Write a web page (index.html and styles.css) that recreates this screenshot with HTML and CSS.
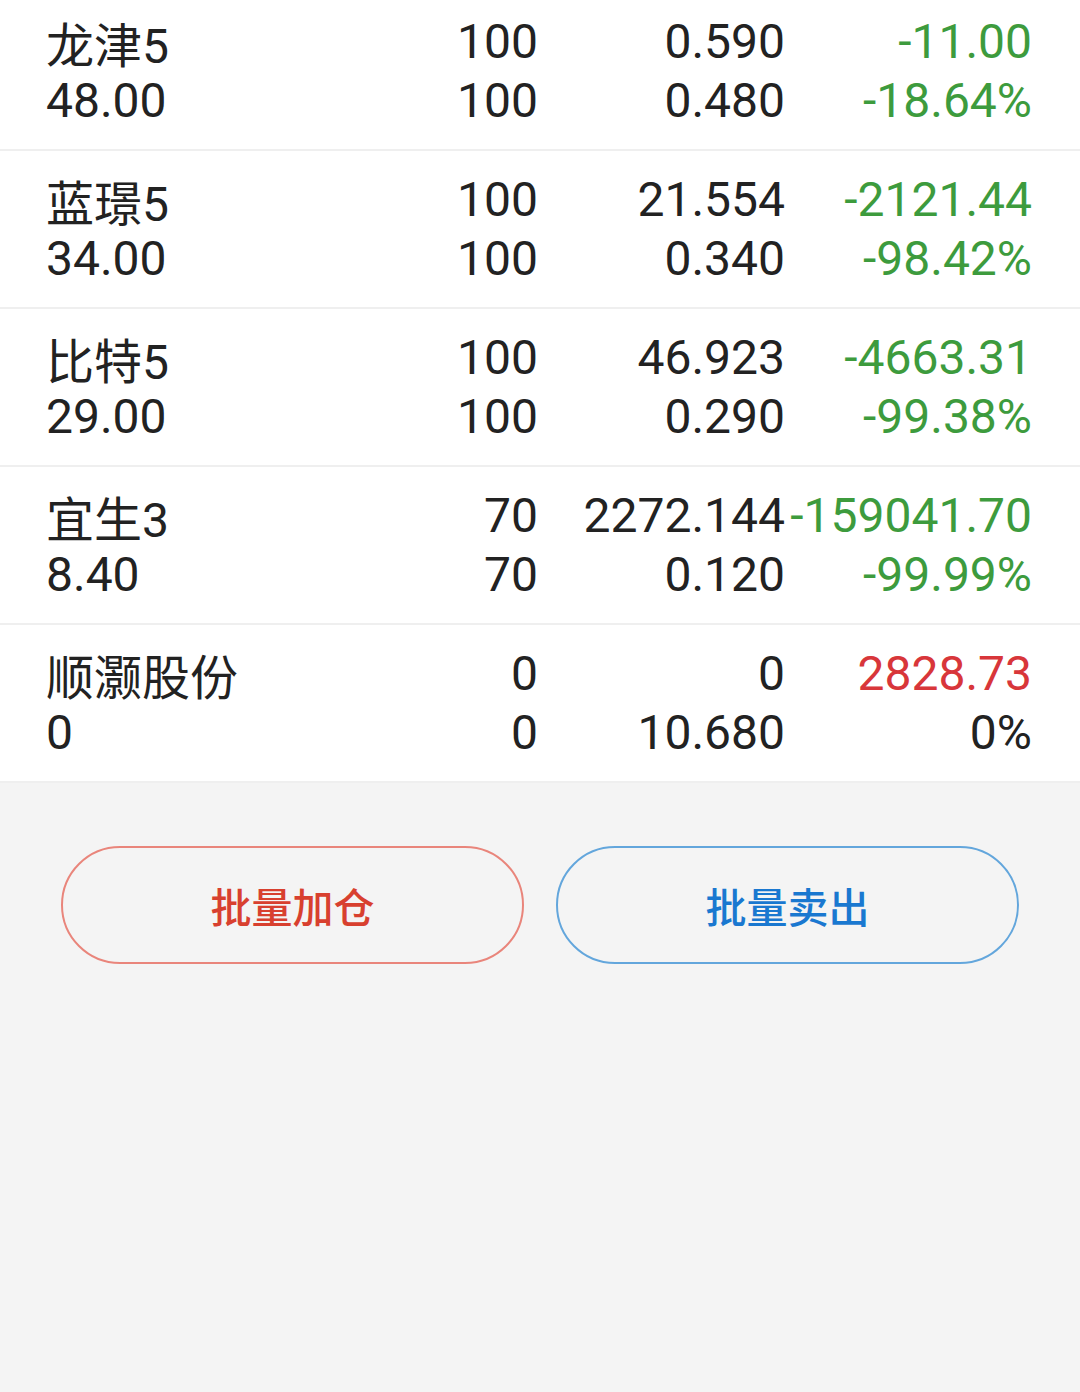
FILE: index.html
```html
<!DOCTYPE html>
<html lang="zh-CN">
<head>
    <meta charset="UTF-8">
    <meta name="viewport" content="width=device-width, initial-scale=1.0">
    <title>持仓</title>
    <link rel="stylesheet" href="styles.css">
</head>
<body>
    <div class="holdings">
        <div class="row first">
            <span class="name">龙津5</span>
            <span class="num">100</span>
            <span class="num">0.590</span>
            <span class="num down">-11.00</span>
            <span class="name">48.00</span>
            <span class="num">100</span>
            <span class="num">0.480</span>
            <span class="num down">-18.64%</span>
        </div>
        <div class="row">
            <span class="name">蓝璟5</span>
            <span class="num">100</span>
            <span class="num">21.554</span>
            <span class="num down">-2121.44</span>
            <span class="name">34.00</span>
            <span class="num">100</span>
            <span class="num">0.340</span>
            <span class="num down">-98.42%</span>
        </div>
        <div class="row">
            <span class="name">比特5</span>
            <span class="num">100</span>
            <span class="num">46.923</span>
            <span class="num down">-4663.31</span>
            <span class="name">29.00</span>
            <span class="num">100</span>
            <span class="num">0.290</span>
            <span class="num down">-99.38%</span>
        </div>
        <div class="row">
            <span class="name">宜生3</span>
            <span class="num">70</span>
            <span class="num">2272.144</span>
            <span class="num down">-159041.70</span>
            <span class="name">8.40</span>
            <span class="num">70</span>
            <span class="num">0.120</span>
            <span class="num down">-99.99%</span>
        </div>
        <div class="row">
            <span class="name">顺灏股份</span>
            <span class="num">0</span>
            <span class="num">0</span>
            <span class="num up">2828.73</span>
            <span class="name">0</span>
            <span class="num">0</span>
            <span class="num">10.680</span>
            <span class="num">0%</span>
        </div>
    </div>
    <div class="actions">
        <button class="btn btn-add">批量加仓</button>
        <button class="btn btn-sell">批量卖出</button>
    </div>
</body>
</html>
```

FILE: styles.css
```css
body{
    margin: 0;
    background-color: #f4f4f4;
    font-family: Roboto, "Noto Sans CJK SC", sans-serif;
    color: #222;
    overflow: hidden;
}
.holdings{
    background-color: #fff;
}
.row{
    display: grid;
    grid-template-columns: repeat(4, 1fr);
    grid-auto-rows: 59px;
    align-items: center;
    padding: 19px 48px 19px 44px;
    border-bottom: 2px solid #efefef;
    font-size: 48px;
    white-space: nowrap;
}
.row.first{
    margin-top: -7px;
}
.name{
    padding-left: 2px;
}
.num{
    justify-self: end;
}
.down{
    color: #3d9b3d;
}
.up{
    color: #d8363a;
}
.actions{
    display: flex;
    gap: 32px;
    padding: 63px 61px 0;
}
.btn{
    flex: 1;
    height: 118px;
    border-radius: 59px;
    background: transparent;
    font-family: "Noto Sans CJK SC", sans-serif;
    font-size: 41px;
    font-weight: 500;
    cursor: pointer;
}
.btn-add{
    border: 2px solid #e9857b;
    color: #d8402f;
}
.btn-sell{
    border: 2px solid #63a6dc;
    color: #1a78d0;
}
```
